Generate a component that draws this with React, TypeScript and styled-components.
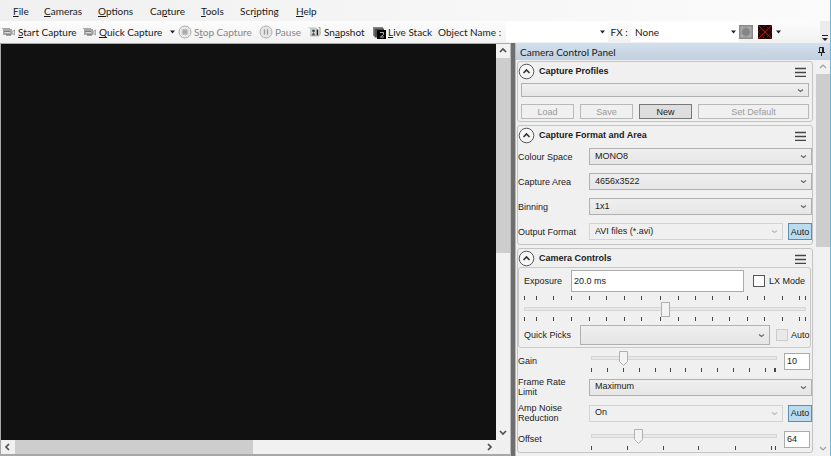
import React from "react";
import styled, { createGlobalStyle, css } from "styled-components";

const svgUrl = (body: string, w: number, h: number) =>
  `url("data:image/svg+xml,${encodeURIComponent(
    `<svg xmlns='http://www.w3.org/2000/svg' width='${w}' height='${h}' viewBox='0 0 ${w} ${h}'>${body}</svg>`
  )}")`;

const chevron = svgUrl("<path d='M1 1.5 L3.5 3.5 L6 1.5' fill='none' stroke='#666' stroke-width='1.1'/>", 7, 5);
const chevronPale = svgUrl("<path d='M1 1.5 L3.5 3.5 L6 1.5' fill='none' stroke='#bbb' stroke-width='1.1'/>", 7, 5);
const triangle = svgUrl("<path d='M0 0.5 H5 L2.5 3.5 Z' fill='#222'/>", 5, 4);
const pointer = svgUrl("<path d='M0.5 0.5 H8.5 V10.5 L4.5 14.5 L0.5 10.5 Z' fill='#f3f3f3' stroke='#b0b0b0'/>", 9, 15);
const block = svgUrl("<rect x='0.5' y='0.5' width='8' height='14' fill='#f3f3f3' stroke='#b0b0b0'/>", 9, 15);

const Global = createGlobalStyle`
  * { box-sizing: border-box; }
  body { margin: 0; background: #f0f0f0; }
  button, input, select { font: inherit; color: inherit; margin: 0; }
`;

const Shell = styled.div`
  display: flex;
  flex-direction: column;
  height: 100vh;
  overflow: hidden;
  border-right: 1px solid #6cb8dc;
  font-family: "Liberation Sans", Arial, sans-serif;
  font-size: 9px;
  color: #1a1a1a;
`;

const chromeFont = css`
  font-family: Lato, "Noto Sans", sans-serif;
  font-size: 10px;
`;

const MenuBar = styled.nav`
  display: flex;
  flex: none;
  gap: 16px;
  height: 21px;
  padding: 0 13px;
  background: linear-gradient(90deg, #f0f0f0, #fbfbfb);
  ${chromeFont}
`;

const MenuItem = styled.button<{ $width: number }>`
  width: ${(p) => p.$width}px;
  padding: 0;
  border: 0;
  background: none;
  text-align: left;
  white-space: nowrap;
`;

const ToolBar = styled.div`
  display: flex;
  flex: none;
  align-items: center;
  height: 22px;
  padding-left: 2px;
  background: linear-gradient(#fcfcfc, #f1f1f1);
  white-space: nowrap;
  ${chromeFont}
`;

const Tool = styled.button<{ $width: number }>`
  display: flex;
  flex: none;
  align-items: center;
  gap: 2px;
  width: ${(p) => p.$width}px;
  padding: 0;
  border: 0;
  background: none;
  &:disabled { color: #858585; }
  svg { flex: none; }
`;

const ToolLabel = styled.label<{ $width: number }>`
  flex: none;
  width: ${(p) => p.$width}px;
`;

const ToolSelect = styled.select<{ $width: number }>`
  flex: none;
  width: ${(p) => p.$width}px;
  height: 20px;
  padding: 0 12px 0 4px;
  border: 0;
  appearance: none;
  background: #fff ${triangle} no-repeat right 3px center;
`;

const Overflow = styled.button`
  align-self: flex-end;
  width: 10px;
  height: 22px;
  margin-left: auto;
  padding: 12px 0 0;
  border: 0;
  background: #ececec;
  line-height: 0;
`;

const Workspace = styled.main`
  display: flex;
  flex: 1;
  min-height: 0;
`;

const Viewer = styled.section`
  display: grid;
  flex: 1;
  grid-template: minmax(0, 1fr) 14px / minmax(0, 1fr) 14px;
  min-width: 0;
  border: solid #a8a8a8;
  border-width: 1px 0 2px 1px;
  background: #f0f0f0;
`;

const Canvas = styled.div`
  background: #111;
`;

const ScrollBar = styled.div<{ $vertical?: boolean }>`
  display: flex;
  flex: none;
  flex-direction: ${(p) => (p.$vertical ? "column" : "row")};
  justify-content: space-between;
  ${(p) => (p.$vertical ? "width: 14px;" : "height: 14px;")}
  background: #f1f1f1;
`;

const ScrollButton = styled.button`
  display: flex;
  flex: none;
  align-items: center;
  justify-content: center;
  width: 14px;
  height: 14px;
  padding: 0;
  border: 0;
  background: none;
`;

const ScrollTrack = styled.div<{ $vertical?: boolean }>`
  display: flex;
  flex: 1;
  flex-direction: ${(p) => (p.$vertical ? "column" : "row")};
`;

const ScrollThumb = styled.div<{ $size: string }>`
  flex: 0 0 ${(p) => p.$size};
  background: #cdcdcd;
`;

const Splitter = styled.div`
  flex: none;
  width: 6px;
  border: solid #b9b9b9;
  border-width: 0 1px;
  background: #6e6e6e;
`;

const Dock = styled.aside`
  display: flex;
  flex: none;
  flex-direction: column;
  width: 314px;
  background: #f0f0f0;
`;

const DockHeader = styled.header`
  display: flex;
  flex: none;
  align-items: center;
  justify-content: space-between;
  height: 17px;
  padding: 0 5px 0 4px;
  background: linear-gradient(#d3e0ec, #c0cfdf);
  ${chromeFont}
`;

const DockBody = styled.div`
  display: flex;
  flex: 1;
  min-height: 0;
`;

const Groups = styled.div`
  display: flex;
  flex: 1;
  flex-direction: column;
  gap: 3px;
  min-width: 0;
  padding: 1px 3px 0 1px;
  overflow: hidden;
`;

const Group = styled.section`
  flex: none;
  border: 1px solid #c4c4c4;
  border-radius: 3px;
  background: #f0f0f0;
`;

const GroupHead = styled.header`
  display: flex;
  align-items: center;
  height: 18px;
  padding: 0 6px 0 0;
`;

const GroupTitle = styled.h2`
  flex: 1;
  margin: 0 0 0 4px;
  font-size: 9px;
  line-height: 12px;
`;

const IconButton = styled.button`
  display: flex;
  padding: 0;
  border: 0;
  background: none;
`;

const ProfileBody = styled.div`
  display: flex;
  flex-direction: column;
  gap: 7px;
  padding: 3px 3px 2px;
`;

const ButtonRow = styled.div`
  display: grid;
  grid-template-columns: 53px 53px 53px 1fr;
  gap: 6px;
`;

const PushButton = styled.button`
  height: 15px;
  padding: 0;
  border: 1px solid #777;
  background: #dedede;
  line-height: 12px;
  &:disabled {
    border-color: #b9b9b9;
    background: #f0f0f0;
    color: #9a9a9a;
  }
`;

const Combo = styled.select<{ $height?: number }>`
  flex: 1;
  min-width: 0;
  width: 100%;
  height: ${(p) => p.$height ?? 17}px;
  padding: 0 16px 2px 5px;
  border: 1px solid #b0b0b0;
  appearance: none;
  background: ${chevron} no-repeat right 4px center, linear-gradient(#efefef, #e6e6e6);
  &:disabled {
    border-color: #d4d4d4;
    background: ${chevronPale} no-repeat right 4px center, #f0f0f0;
    color: #1a1a1a;
    opacity: 1;
  }
`;

const Row = styled.div<{ $height?: number }>`
  display: flex;
  align-items: center;
  height: ${(p) => p.$height ?? 25}px;
`;

const RowLabel = styled.label`
  flex: none;
  width: 71px;
  line-height: 10px;
`;

const AutoButton = styled.button`
  flex: none;
  width: 24px;
  height: 17px;
  margin-left: 5px;
  padding: 0;
  border: 1px solid #5d8db0;
  background: #bbdcef;
`;

const Box = styled.input<{ $wide?: boolean }>`
  border: 1px solid #ababab;
  background: #fff;
  padding: 0 2px;
  ${(p) =>
    p.$wide
      ? css`
          flex: 1;
          min-width: 0;
          height: 22px;
        `
      : css`
          flex: none;
          width: 26px;
          height: 17px;
          margin: 0 2px 0 5px;
        `}
`;

const Exposure = styled.div`
  margin-right: 1px;
  padding: 2px 1px 2px 5px;
  border: 1px solid #c8c8c8;
  border-radius: 3px;
`;

const ExposureRow = styled.div`
  display: flex;
  align-items: center;
`;

const ExposureScale = styled.div`
  display: flex;
  flex-direction: column;
  gap: 1px;
  padding: 4px 3px 4px 0;
`;

const ExposureLabel = styled.label<{ $width: number }>`
  flex: none;
  width: ${(p) => p.$width}px;
  white-space: nowrap;
`;

const CheckLabel = styled.label<{ $muted?: boolean }>`
  display: flex;
  flex: none;
  align-items: center;
  gap: ${(p) => (p.$muted ? 3 : 4)}px;
  margin-left: ${(p) => (p.$muted ? 6 : 9)}px;
  width: ${(p) => (p.$muted ? 33 : 56)}px;
  white-space: nowrap;
`;

const Check = styled.input.attrs({ type: "checkbox" })`
  flex: none;
  width: 12px;
  height: 12px;
  border: 1px solid #555;
  appearance: none;
  background: #fff;
  &:disabled {
    border-color: #ccc;
    background: #e9e9e9;
  }
`;

const SliderStack = styled.div`
  display: flex;
  flex: 1;
  flex-direction: column;
  gap: 2px;
  padding: 0 2px;
`;

const Range = styled.input.attrs({ type: "range" })<{ $block?: boolean }>`
  width: 100%;
  height: 15px;
  appearance: none;
  background: none;
  &::-webkit-slider-runnable-track {
    height: 4px;
    border: 1px solid #d6d6d6;
    background: #e7e7e7;
  }
  &::-webkit-slider-thumb {
    appearance: none;
    width: 9px;
    height: 15px;
    margin-top: -6px;
    background: ${(p) => (p.$block ? block : pointer)} no-repeat;
  }
`;

const TickSvg = styled.svg`
  display: block;
  width: 100%;
  height: 4px;
`;

const Ticks = ({ at, span }: { at: number[]; span: number }) => (
  <TickSvg viewBox={`0 0 ${span} 4`} preserveAspectRatio="none" shapeRendering="crispEdges" aria-hidden>
    {at.map((x) => (
      <rect key={x} x={x} y={0} width={1} height={4} fill="#444" />
    ))}
  </TickSvg>
);

const arrowPaths = {
  up: "M1 5 L4 2 L7 5",
  down: "M1 2 L4 5 L7 2",
  left: "M5 1 L2 4 L5 7",
  right: "M3 1 L6 4 L3 7",
};

const Arrow = ({ to, pale }: { to: keyof typeof arrowPaths; pale?: boolean }) => (
  <svg width="8" height="8" viewBox="0 0 8 8" aria-hidden>
    <path d={arrowPaths[to]} fill="none" stroke={pale ? "#a0a0a0" : "#505050"} strokeWidth={pale ? 1.2 : 1.7} />
  </svg>
);

const CameraIcon = () => (
  <svg width="14" height="12" viewBox="0 0 14 12" aria-hidden>
    <path d="M0 2.5H8" stroke="#a8a8a8" />
    <rect x="1" y="3" width="9" height="6" fill="#a9a9a9" />
    <path d="M2 5.5H8" stroke="#7c7c7c" />
    <path d="M3 6.5H8" stroke="#dedede" />
    <path d="M10 5.5L12.5 4V9L10 7.5Z" fill="#dadada" stroke="#9a9a9a" strokeWidth="0.8" />
    <path d="M4 9H9" stroke="#707070" strokeWidth="1.2" />
  </svg>
);

const RoundIcon = ({ pause }: { pause?: boolean }) => (
  <svg width="14" height="14" viewBox="0 0 14 14" aria-hidden>
    <circle cx="7" cy="7" r="6" fill="#eee" stroke="#aaa" />
    <circle cx="7" cy="7" r="4.7" fill="#e2e2e2" />
    {pause ? <path d="M5.5 4.5V9.5M8.5 4.5V9.5" stroke="#999" strokeWidth="1.2" /> : <rect x="4.5" y="4.5" width="5" height="5" fill="#aaa" />}
  </svg>
);

const SnapshotIcon = () => (
  <svg width="14" height="12" viewBox="0 0 14 12" aria-hidden>
    <path d="M0.5 1.5L3 2.5V9.5L1.5 9" fill="none" stroke="#c4c4c4" />
    <rect x="3" y="2" width="5.5" height="8" fill="#d4dade" stroke="#a9b0b4" strokeWidth="0.7" />
    <circle cx="5.5" cy="4.8" r="1.4" fill="#444" />
    <path d="M3.5 9.5L5.5 6L7.5 9.5Z" fill="#555" />
    <path d="M9.5 3.5V9.5" stroke="#222" strokeWidth="1.5" />
    <path d="M10.5 1.5H12V8.5L10 10.5" fill="none" stroke="#999" />
  </svg>
);

const StackIcon = () => (
  <svg width="13" height="13" viewBox="0 0 13 13" aria-hidden>
    <rect x="0" y="1" width="10" height="9" fill="#858585" />
    <rect x="1.5" y="2.5" width="9.5" height="9" fill="#4c4c4c" />
    <rect x="4" y="4" width="9" height="9" fill="#050505" />
    <path d="M7 6.5H10.5V8.5L7.5 11H11" fill="none" stroke="#ccc" strokeWidth="0.9" />
  </svg>
);

const TargetIcon = () => (
  <svg width="14" height="14" viewBox="0 0 14 14" aria-hidden>
    <rect width="14" height="14" fill="#8b8b8b" />
    <rect x="1.5" y="1.5" width="11" height="11" fill="#aaa" />
    <circle cx="7" cy="7" r="4.2" fill="#858585" stroke="#989898" />
  </svg>
);

const ReticleIcon = () => (
  <svg width="14" height="14" viewBox="0 0 14 14" aria-hidden>
    <rect width="14" height="14" fill="#1a0000" />
    <path d="M0 0L14 14M14 0L0 14" stroke="#a0161c" strokeWidth="1.2" />
    <path d="M7 0L14 7L7 14L0 7Z" fill="none" stroke="#80121a" strokeWidth="1" strokeDasharray="2 1" />
  </svg>
);

const Caret = () => (
  <svg width="5" height="4" viewBox="0 0 5 4" aria-hidden>
    <path d="M0 0.5H5L2.5 3.5Z" fill="#222" />
  </svg>
);

const PinIcon = () => (
  <svg width="7" height="9" viewBox="0 0 7 9" aria-hidden>
    <path d="M1.5 5.5V0.5H5.5V5.5M4.5 0.5V5.5M0 5.5H7M3.5 5.5V9" fill="none" stroke="#222" />
  </svg>
);

const GroupHeader = ({ title }: { title: string }) => (
  <GroupHead>
    <IconButton aria-label={`Collapse ${title}`}>
      <svg width="17" height="17" viewBox="0 0 17 17" aria-hidden>
        <circle cx="8.5" cy="8.5" r="7.3" fill="#f7f7f7" stroke="#555" />
        <path d="M5.5 10L8.5 7L11.5 10" fill="none" stroke="#333" strokeWidth="1.6" />
      </svg>
    </IconButton>
    <GroupTitle>{title}</GroupTitle>
    <IconButton aria-label={`${title} menu`}>
      <svg width="11" height="12" viewBox="0 0 11 12" aria-hidden>
        <path d="M0 3.5H11M0 7.5H11M0 11.5H11" stroke="#444" strokeWidth="1.4" />
      </svg>
    </IconButton>
  </GroupHead>
);

type FieldProps = { id: string; label: React.ReactNode; value: string; auto?: boolean; height?: number };

const SelectField = ({ id, label, value, auto, height }: FieldProps) => (
  <Row $height={height}>
    <RowLabel htmlFor={id}>{label}</RowLabel>
    <Combo id={id} disabled={auto}>
      <option>{value}</option>
    </Combo>
    {auto && <AutoButton aria-pressed="true">Auto</AutoButton>}
  </Row>
);

type SliderProps = { id: string; label: string; value: string; position: number; ticks: number[] };

const SliderField = ({ id, label, value, position, ticks }: SliderProps) => (
  <Row $height={26}>
    <RowLabel htmlFor={id}>{label}</RowLabel>
    <SliderStack>
      <Range id={id} min={0} max={1000} defaultValue={position} />
      <Ticks at={ticks} span={187} />
    </SliderStack>
    <Box aria-label={`${label} value`} defaultValue={value} />
  </Row>
);

const menus: [string, string, string, number][] = [
  ["", "F", "ile", 15],
  ["", "C", "ameras", 38],
  ["", "O", "ptions", 36],
  ["Ca", "p", "ture", 35],
  ["", "T", "ools", 23],
  ["Scr", "i", "pting", 40],
  ["", "H", "elp", 21],
];

const exposureTicks = [0, 12, 29, 47, 65, 82, 100, 117, 136, 154, 171, 188, 205, 223, 240, 258, 275, 281];
const gainTicks = [0, 16, 32, 48, 64, 79, 95, 111, 127, 143, 159, 175, 184, 185];
const offsetTicks = [0, 36, 72, 108, 145, 181, 185];

export default function App() {
  return (
    <Shell>
      <Global />
      <MenuBar>
        {menus.map(([before, key, after, width]) => (
          <MenuItem key={key} $width={width}>
            {before}
            <u>{key}</u>
            {after}
          </MenuItem>
        ))}
      </MenuBar>
      <ToolBar>
        <Tool $width={81}><CameraIcon /><span><u>S</u>tart Capture</span></Tool>
        <Tool $width={87}><CameraIcon /><span><u>Q</u>uick Capture</span></Tool>
        <Tool $width={8} aria-label="Quick capture options"><Caret /></Tool>
        <Tool $width={81} disabled><RoundIcon /><span>S<u>t</u>op Capture</span></Tool>
        <Tool $width={49} disabled><RoundIcon pause /><span>Pause</span></Tool>
        <Tool $width={65}><SnapshotIcon /><span>Sn<u>a</u>pshot</span></Tool>
        <Tool $width={65}><StackIcon /><span><u>L</u>ive Stack</span></Tool>
        <ToolLabel $width={68} htmlFor="object-name">Object Name :</ToolLabel>
        <ToolSelect id="object-name" $width={102} />
        <ToolLabel $width={23} htmlFor="fx">&nbsp;FX :</ToolLabel>
        <ToolSelect id="fx" $width={108}><option>None</option></ToolSelect>
        <Tool $width={19} aria-label="Target"><TargetIcon /></Tool>
        <Tool $width={18} aria-label="Reticle"><ReticleIcon /></Tool>
        <Tool $width={8} aria-label="Reticle options"><Caret /></Tool>
        <Overflow aria-label="More tools">
          <svg width="6" height="7" viewBox="0 0 6 7" aria-hidden>
            <path d="M0 0.5H6" stroke="#222" />
            <path d="M0 3H6L3 6Z" fill="#222" />
          </svg>
        </Overflow>
      </ToolBar>
      <Workspace>
        <Viewer>
          <Canvas role="img" aria-label="Camera preview" />
          <ScrollBar $vertical>
            <ScrollButton aria-label="Scroll up"><Arrow to="up" /></ScrollButton>
            <ScrollTrack $vertical><ScrollThumb $size="53%" /></ScrollTrack>
            <ScrollButton aria-label="Scroll down"><Arrow to="down" /></ScrollButton>
          </ScrollBar>
          <ScrollBar>
            <ScrollButton aria-label="Scroll left"><Arrow to="left" /></ScrollButton>
            <ScrollTrack><ScrollThumb $size="51%" /></ScrollTrack>
            <ScrollButton aria-label="Scroll right"><Arrow to="right" /></ScrollButton>
          </ScrollBar>
        </Viewer>
        <Splitter />
        <Dock>
          <DockHeader>
            <span>Camera Control Panel</span>
            <IconButton aria-label="Pin panel"><PinIcon /></IconButton>
          </DockHeader>
          <DockBody>
            <Groups>
              <Group>
                <GroupHeader title="Capture Profiles" />
                <ProfileBody>
                  <Combo aria-label="Capture profile" $height={15} />
                  <ButtonRow>
                    <PushButton disabled>Load</PushButton>
                    <PushButton disabled>Save</PushButton>
                    <PushButton>New</PushButton>
                    <PushButton disabled>Set Default</PushButton>
                  </ButtonRow>
                </ProfileBody>
              </Group>
              <Group>
                <GroupHeader title="Capture Format and Area" />
                <SelectField id="colour" label="Colour Space" value="MONO8" />
                <SelectField id="area" label="Capture Area" value="4656x3522" />
                <SelectField id="binning" label="Binning" value="1x1" />
                <SelectField id="format" label="Output Format" value="AVI files (*.avi)" auto />
              </Group>
              <Group>
                <GroupHeader title="Camera Controls" />
                <Exposure>
                  <ExposureRow>
                    <ExposureLabel $width={47} htmlFor="exposure">Exposure</ExposureLabel>
                    <Box id="exposure" $wide defaultValue="20.0 ms" />
                    <CheckLabel><Check />LX Mode</CheckLabel>
                  </ExposureRow>
                  <ExposureScale>
                    <Ticks at={exposureTicks} span={282} />
                    <Range aria-label="Exposure" $block min={0} max={1000} defaultValue={500} />
                    <Ticks at={exposureTicks} span={282} />
                  </ExposureScale>
                  <ExposureRow>
                    <ExposureLabel $width={56} htmlFor="picks">Quick Picks</ExposureLabel>
                    <Combo id="picks" $height={20} />
                    <CheckLabel $muted><Check disabled />Auto</CheckLabel>
                  </ExposureRow>
                </Exposure>
                <SliderField id="gain" label="Gain" value="10" position={156} ticks={gainTicks} />
                <SelectField id="rate" label={<>Frame Rate<br />Limit</>} value="Maximum" height={26} />
                <SelectField id="noise" label={<>Amp Noise<br />Reduction</>} value="On" height={26} auto />
                <SliderField id="offset" label="Offset" value="64" position={238} ticks={offsetTicks} />
              </Group>
            </Groups>
            <ScrollBar $vertical>
              <ScrollButton aria-label="Scroll panel up"><Arrow to="up" pale /></ScrollButton>
              <ScrollTrack $vertical><ScrollThumb $size="47%" /></ScrollTrack>
              <ScrollButton aria-label="Scroll panel down"><Arrow to="down" pale /></ScrollButton>
            </ScrollBar>
          </DockBody>
        </Dock>
      </Workspace>
    </Shell>
  );
}
